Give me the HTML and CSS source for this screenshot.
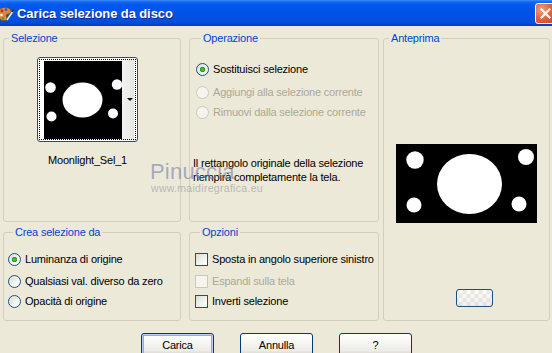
FILE: index.html
```html
<!DOCTYPE html>
<html lang="it">
<head>
<meta charset="utf-8">
<title>Carica selezione da disco</title>
<link rel="stylesheet" href="styles.css">
</head>
<body>
<div class="window">
  <div class="titlebar">
    <svg class="appicon" width="16" height="18" viewBox="0 0 16 18">
      <path d="M1 6 C2 2 9 1 12 4 C14 6 13 9 10 9 C8 9 8 11 9 13 C10 16 4 17 2 14 C0 12 0 9 1 6 Z" fill="#D88A3A" stroke="#7A4310" stroke-width="0.8"/>
      <circle cx="4" cy="6" r="1.4" fill="#E02020"/>
      <circle cx="8" cy="4.5" r="1.3" fill="#2050E0"/>
      <circle cx="3.5" cy="10" r="1.3" fill="#F4F4F4"/>
      <circle cx="5" cy="13.5" r="1.2" fill="#30A030"/>
      <path d="M9 15 L15 6" stroke="#F2E6C8" stroke-width="1.6"/>
      <path d="M14 7 L15.5 4.5" stroke="#303030" stroke-width="1.6"/>
    </svg>
    <span class="title">Carica selezione da disco</span>
    <span class="close">
      <svg width="11" height="11" viewBox="0 0 11 11"><path d="M1.5 1.5 L9.5 9.5 M9.5 1.5 L1.5 9.5" stroke="#fff" stroke-width="2.2" stroke-linecap="square"/></svg>
    </span>
  </div>

  <div class="content">
    <div class="groups">
      <fieldset class="group g-sel">
        <legend>Selezione</legend>
        <div class="thumbwrap">
          <div class="thumb">
            <div class="focus">
              <svg class="thumbimg" width="78" height="78" viewBox="0 0 78 78">
                <rect width="78" height="78" fill="#000"/>
                <ellipse cx="38.5" cy="39" rx="20" ry="17.5" fill="#fff"/>
                <circle cx="6.5" cy="26.5" r="5.3" fill="#fff"/>
                <circle cx="73" cy="23.5" r="5.2" fill="#fff"/>
                <circle cx="7.5" cy="55.5" r="5" fill="#fff"/>
                <circle cx="69" cy="52.5" r="5" fill="#fff"/>
              </svg>
              <div class="strip"><span class="arrow"></span></div>
            </div>
          </div>
          <div class="thumbname">Moonlight_Sel_1</div>
        </div>
      </fieldset>

      <fieldset class="group g-op">
        <legend>Operazione</legend>
        <div class="opt"><span class="radio checked"></span><span>Sostituisci selezione</span></div>
        <div class="opt second disabled"><span class="radio"></span><span>Aggiungi alla selezione corrente</span></div>
        <div class="opt third disabled"><span class="radio"></span><span>Rimuovi dalla selezione corrente</span></div>
        <p class="desc">Il rettangolo originale della selezione<br>riempirà completamente la tela.</p>
        <div class="watermark"><span class="wm-big">Pinuccia</span><span class="wm-small">www.maidiregrafica.eu</span></div>
      </fieldset>

      <fieldset class="group g-prev">
        <legend>Anteprima</legend>
        <svg class="preview" width="141" height="79" viewBox="0 0 141 79">
          <rect width="141" height="79" fill="#000"/>
          <ellipse cx="73.5" cy="40" rx="32.5" ry="30" fill="#fff"/>
          <circle cx="19" cy="16" r="8.7" fill="#fff"/>
          <circle cx="130" cy="13" r="8" fill="#fff"/>
          <circle cx="18" cy="61" r="7.5" fill="#fff"/>
          <circle cx="123" cy="60" r="7.5" fill="#fff"/>
        </svg>
        <span class="bgbtn"></span>
      </fieldset>

      <fieldset class="group g-crea">
        <legend>Crea selezione da</legend>
        <div class="opt"><span class="radio checked"></span><span>Luminanza di origine</span></div>
        <div class="opt second"><span class="radio"></span><span>Qualsiasi val. diverso da zero</span></div>
        <div class="opt third"><span class="radio"></span><span>Opacità di origine</span></div>
      </fieldset>

      <fieldset class="group g-opz">
        <legend>Opzioni</legend>
        <div class="opt"><span class="check"></span><span>Sposta in angolo superiore sinistro</span></div>
        <div class="opt second disabled"><span class="check"></span><span>Espandi sulla tela</span></div>
        <div class="opt third"><span class="check"></span><span>Inverti selezione</span></div>
      </fieldset>
    </div>

    <div class="buttons">
      <button class="btn default">Carica</button>
      <button class="btn">Annulla</button>
      <button class="btn">?</button>
    </div>
  </div>
</div>
</body>
</html>
```

FILE: styles.css
```css
* { box-sizing: border-box; }
html, body { margin: 0; padding: 0; }
body {
  width: 552px;
  height: 353px;
  overflow: hidden;
  background: #ECE9D8;
  font-family: "Liberation Sans", Arial, sans-serif;
  font-size: 11px;
  letter-spacing: -0.2px;
  color: #000;
}
.window { width: 552px; height: 353px; overflow: hidden; }

.titlebar {
  height: 26px;
  display: flex;
  align-items: center;
  overflow: hidden;
  background: linear-gradient(to bottom, #3C8DF8 0, #1467F0 2px, #0058EE 5px, #0054E8 45%, #004FE0 80%, #0046D2 92%, #003BBE 100%);
}
.appicon { margin-left: -2px; margin-top: 1px; flex: none; }
.title {
  margin-left: 3px;
  color: #fff;
  font-weight: bold;
  font-size: 13px;
  letter-spacing: -0.1px;
  text-shadow: 1px 1px 0 #0A2A8A;
  flex: 1;
}
.close {
  flex: none;
  width: 21px;
  height: 21px;
  margin-right: -4px;
  border: 1px solid #fff;
  border-radius: 3px;
  background: radial-gradient(circle at 30% 30%, #F0A080 0, #E06840 45%, #C8401C 100%);
  display: flex;
  align-items: center;
  justify-content: center;
}

.content { padding: 6px 0 0 3px; }

.groups {
  display: grid;
  grid-template-columns: 178px 8px 190px 4px 167px;
  grid-template-rows: 190px 95px;
  row-gap: 4px;
}
.group {
  margin: 0;
  padding: 0;
  min-width: 0;
  border: 1px solid #D0D0BF;
  border-radius: 3px;
}
.group legend {
  margin-left: 5px;
  padding: 0 2px;
  line-height: 13px;
  color: #0046D5;
}
.g-sel { grid-column: 1; grid-row: 1; }
.g-op { grid-column: 3; grid-row: 1; position: relative; padding: 15px 0 0 6px; }
.g-prev { grid-column: 5; grid-row: 1 / span 2; display: flex; flex-direction: column; align-items: center; }
.g-crea { grid-column: 1; grid-row: 2; padding: 11px 0 0 4px; }
.g-opz { grid-column: 3; grid-row: 2; padding: 11px 0 0 5px; }

/* Selezione */
.thumbwrap {
  width: 101px;
  margin: 12px 0 0 33px;
  display: flex;
  flex-direction: column;
  align-items: center;
}
.thumb {
  width: 101px;
  height: 85px;
  border: 1px solid #1C5180;
  border-radius: 3px;
  background: #fff;
  padding: 1px;
}
.focus {
  height: 100%;
  border: 1px dotted #000;
  display: flex;
  padding: 0 0 0 4px;
  align-items: center;
}
.thumbimg { flex: none; display: block; }
.strip {
  flex: 1;
  align-self: stretch;
  margin: 0 1px 0 0;
  background: linear-gradient(to right, #F2F2F0, #E6E6E2);
  display: flex;
  align-items: center;
  justify-content: flex-end;
  padding-right: 1px;
}
.arrow {
  width: 0; height: 0;
  border-left: 3px solid transparent;
  border-right: 3px solid transparent;
  border-top: 3px solid #000;
}
.thumbname { margin-top: 12px; line-height: 13px; white-space: nowrap; }

/* options */
.opt {
  height: 18px;
  display: flex;
  align-items: center;
  gap: 4px;
  white-space: nowrap;
}
.opt.second { margin-top: 4px; }
.g-op .opt.second { margin-top: 5px; }
.opt.third { margin-top: 2px; }
.opt.disabled { color: #ACA899; }

.radio {
  flex: none;
  width: 13px;
  height: 13px;
  border-radius: 50%;
  border: 1px solid #1C5180;
  background: linear-gradient(135deg, #DCDCD5 0%, #F4F4F0 60%, #FFFFFF 100%);
}
.radio.checked {
  background:
    radial-gradient(circle at 50% 50%, #55CC55 0, #21A121 2.3px, transparent 3px),
    linear-gradient(135deg, #DCDCD5 0%, #F4F4F0 60%, #FFFFFF 100%);
}
.disabled .radio { border-color: #CAC8BB; background: #F5F4EE; }

.check {
  flex: none;
  width: 13px;
  height: 13px;
  border: 1px solid #1C5180;
  background: linear-gradient(135deg, #DCDCD5 0%, #F4F4F0 60%, #FFFFFF 100%);
}
.disabled .check { border-color: #CAC8BB; background: #F5F4EE; }

.desc {
  margin: 35px 0 0 -3px;
  line-height: 14px;
}
.watermark {
  position: absolute;
  left: -40px;
  top: 116px;
  display: flex;
  flex-direction: column;
  pointer-events: none;
}
.wm-big {
  font-size: 22px;
  line-height: 22px;
  color: rgba(118, 126, 168, 0.6);
  letter-spacing: 0.2px;
}
.wm-small {
  font-size: 10.5px;
  line-height: 10px;
  color: rgba(130, 130, 150, 0.5);
  letter-spacing: 0.3px;
  margin-left: 1px;
}

/* Anteprima */
.preview { display: block; margin-top: 99px; }
.bgbtn {
  align-self: flex-start;
  margin: 66px 0 0 72px;
  width: 37px;
  height: 18px;
  border: 1px solid #1C5180;
  border-radius: 3px;
  background:
    linear-gradient(to bottom, rgba(255,255,255,0.3), rgba(220,218,208,0.35)),
    repeating-conic-gradient(#E2E2E2 0 25%, #FBFBFB 0 50%) 50% 50% / 8px 8px;
}

/* buttons */
.buttons {
  display: flex;
  gap: 26px;
  padding-left: 138px;
  margin-top: 12px;
}
.btn {
  width: 73px;
  height: 23px;
  padding: 0;
  font-family: inherit;
  font-size: 11px;
  letter-spacing: inherit;
  color: #000;
  border: 1px solid #003C74;
  border-radius: 3px;
  background: linear-gradient(to bottom, #FFFFFF 0%, #F6F6F2 40%, #ECEBE6 80%, #D6D0C5 100%);
}
.btn.default {
  box-shadow: inset 0 0 0 1px #B8D0F5, inset 0 0 0 2px #89ADE4;
}
```
